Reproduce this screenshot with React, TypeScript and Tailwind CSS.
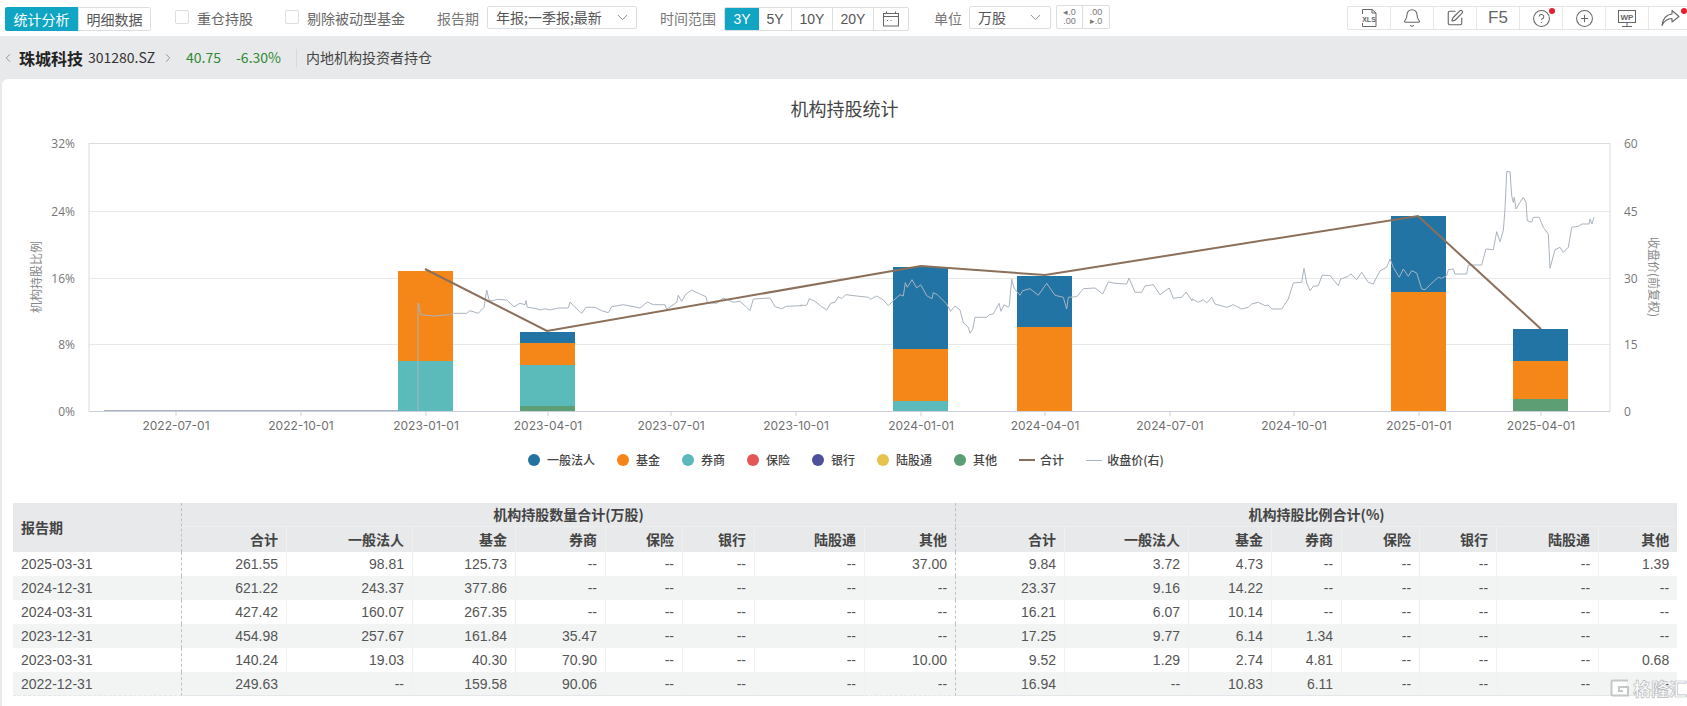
import React from "react";
import { Bell, ChevronDown, ChevronLeft, ChevronRight, CircleHelp, CirclePlus, SquarePen } from "lucide-react";

const segA = [[26,90],[32,122],[70,126],[120,122],[130,118],[170,118],[180,110],[205,118],[222,100],[230,48],[238,80],[250,80],[262,76],[290,78],[312,98],[330,88],[345,92],[348,80],[352,100],[375,103],[392,108],[405,104],[420,108],[445,102],[475,102],[480,84],[495,100],[515,118],[528,100],[555,100],[575,110],[595,116],[605,98],[640,92],[680,100],[690,102],[712,84],[730,92],[765,92],[770,106],[800,85],[805,64],[815,82],[828,60],[845,48],[865,58],[888,68],[892,86],[920,88],[940,72],[955,78],[970,85],[990,82],[1010,100],[1020,110],[1030,75],[1080,72],[1095,98],[1115,104],[1130,97],[1176,95]];
const segB = [[0,124],[20,124],[28,104],[45,112],[65,128],[80,138],[92,118],[105,115],[115,98],[125,104],[137,92],[170,96],[205,100],[212,106],[230,96],[250,108],[265,125],[280,110],[300,92],[310,96],[316,56],[322,70],[336,47],[350,72],[362,62],[380,95],[396,104],[400,86],[412,92],[440,120],[452,142],[465,126],[480,138],[490,176],[505,190],[510,208],[518,196],[525,160],[560,160],[568,152],[580,150],[597,118],[603,142],[612,122],[625,130],[628,125],[635,46],[642,72],[660,94],[668,80],[690,74],[715,94],[740,58],[765,94],[790,100],[800,135],[805,100],[830,98],[850,74],[885,72],[908,90],[925,54],[945,58],[980,60],[987,42],[1005,85],[1025,85],[1035,66],[1060,62],[1080,92],[1108,72],[1120,103],[1145,100],[1158,84],[1176,110]];
const segC = [[6,420],[25,430],[40,422],[50,432],[65,415],[75,435],[110,445],[130,437],[155,450],[175,445],[185,435],[205,430],[225,440],[235,438],[245,450],[275,450],[295,420],[310,372],[335,370],[342,328],[350,372],[360,395],[370,382],[385,380],[397,348],[420,350],[445,380],[452,360],[475,352],[482,344],[500,362],[515,340],[535,370],[550,375],[570,335],[590,325],[600,300],[610,325],[628,355],[640,330],[655,352],[665,335],[680,342],[695,390],[705,392],[730,368],[745,355],[755,358],[770,350],[775,332],[790,330],[795,345],[830,345],[835,318],[875,318],[888,270],[910,272],[920,218],[930,248],[940,215],[945,150],[950,38],[960,38],[965,110],[970,130],[973,115],[978,150],[990,130],[1000,115],[1008,130],[1012,185],[1025,190],[1030,175],[1048,175],[1060,205],[1075,225],[1080,328],[1095,272],[1110,265],[1120,280],[1135,265],[1145,205],[1165,202],[1176,195]];

const map = (seg: number[][], x0: number, y0: number) => seg.map(([x, y]) => `${(x0 + x / 3).toFixed(1)},${(y0 + y / 3).toFixed(1)}`).join(" ");
const pricePoints = ["418,412 418,304", map(segA, 410, 275), map(segB, 800, 265), map(segC, 1190, 160), "1589,225 1590,220 1592,225 1594,218"].join(" ");

const BLUE = "#2274a5", ORANGE = "#f58718", TEAL = "#5bbaba", GREEN = "#5e9e75";
const bars: { x: number; w: number; parts: [number, number, string][] }[] = [
  { x: 398, w: 55, parts: [[272, 362, ORANGE], [362, 412, TEAL]] },
  { x: 520, w: 55, parts: [[333, 344, BLUE], [344, 366, ORANGE], [366, 407, TEAL], [407, 412, GREEN]] },
  { x: 893, w: 55, parts: [[268, 350, BLUE], [350, 402, ORANGE], [402, 412, TEAL]] },
  { x: 1017, w: 55, parts: [[277, 328, BLUE], [328, 412, ORANGE]] },
  { x: 1391, w: 55, parts: [[217, 293, BLUE], [293, 412, ORANGE]] },
  { x: 1513, w: 55, parts: [[330, 362, BLUE], [362, 400, ORANGE], [400, 412, GREEN]] },
];
const xTicks: [number, string][] = [[176, "2022-07-01"], [301, "2022-10-01"], [426, "2023-01-01"], [548, "2023-04-01"], [671, "2023-07-01"], [796, "2023-10-01"], [921, "2024-01-01"], [1045, "2024-04-01"], [1170, "2024-07-01"], [1294, "2024-10-01"], [1419, "2025-01-01"], [1541, "2025-04-01"]];
const yTicks: [number, string, string][] = [[144, "32%", "60"], [212, "24%", "45"], [279, "16%", "30"], [345, "8%", "15"], [412, "0%", "0"]];

const legend: [string, string][] = [["#22739f", "一般法人"], ["#f58518", "基金"], ["#5bb9bb", "券商"], ["#e45756", "保险"], ["#4c5199", "银行"], ["#e5c34c", "陆股通"], ["#5a9e73", "其他"]];

const cols = ["合计", "一般法人", "基金", "券商", "保险", "银行", "陆股通", "其他"];
const widths = [169, 105, 126, 103, 90, 77, 72, 110, 91, 109, 124, 83, 70, 78, 77, 102, 78];
const rows = [
  ["2025-03-31", "261.55", "98.81", "125.73", "--", "--", "--", "--", "37.00", "9.84", "3.72", "4.73", "--", "--", "--", "--", "1.39"],
  ["2024-12-31", "621.22", "243.37", "377.86", "--", "--", "--", "--", "--", "23.37", "9.16", "14.22", "--", "--", "--", "--", "--"],
  ["2024-03-31", "427.42", "160.07", "267.35", "--", "--", "--", "--", "--", "16.21", "6.07", "10.14", "--", "--", "--", "--", "--"],
  ["2023-12-31", "454.98", "257.67", "161.84", "35.47", "--", "--", "--", "--", "17.25", "9.77", "6.14", "1.34", "--", "--", "--", "--"],
  ["2023-03-31", "140.24", "19.03", "40.30", "70.90", "--", "--", "--", "10.00", "9.52", "1.29", "2.74", "4.81", "--", "--", "--", "0.68"],
  ["2022-12-31", "249.63", "--", "159.58", "90.06", "--", "--", "--", "--", "16.94", "--", "10.83", "6.11", "--", "--", "--", "--"],
];

const ui = "font-['Noto_Sans_CJK_SC','Noto_Sans',sans-serif]";

function Check({ label, w }: { label: string; w: string }) {
  return (
    <div className="flex shrink-0 items-start">
      <span className="mt-[10px] h-[14px] w-[14px] rounded-[2px] border border-[#dcdfe2] bg-white" />
      <span className={`ml-2 mt-[6px] text-[14px] leading-6 text-[#666] ${w}`}>{label}</span>
    </div>
  );
}

const tool = "relative flex h-full w-[43px] shrink-0 items-center justify-center border-r border-[#e6e7e8] text-[#666]";

export default function App() {
  return (
    <div className={`relative h-[706px] w-[1687px] overflow-hidden bg-[#e8e9ea] ${ui}`}>
      {/* top toolbar */}
      <div className="flex h-9 items-start bg-white">
        <div className="ml-[5px] mt-[7px] flex h-6 shrink-0 text-[14px] leading-6">
          <span className="w-[73px] rounded-l-[2px] bg-[#10a5c2] text-center text-white">统计分析</span>
          <span className="w-[73px] rounded-r-[2px] border border-[#dcdfe2] text-center leading-[22px] text-[#555]">明细数据</span>
        </div>
        <div className="ml-[24px]"><Check label="重仓持股" w="w-[56px]" /></div>
        <div className="ml-[32px]"><Check label="剔除被动型基金" w="w-[98px]" /></div>
        <span className="ml-[32px] mt-[6px] w-[42px] shrink-0 text-[14px] leading-6 text-[#777]">报告期</span>
        <div className="ml-[8px] mt-[6px] flex h-[23px] w-[150px] shrink-0 items-center justify-between rounded-[2px] border border-[#dcdfe2] pl-2 pr-[5px] text-[14px] text-[#555]">
          <span>年报;一季报;最新</span>
          <ChevronDown size={17} strokeWidth={1.2} className="text-[#777]" />
        </div>
        <span className="ml-[23px] mt-[6px] w-[56px] shrink-0 text-[14px] leading-6 text-[#777]">时间范围</span>
        <div className="ml-[8px] mt-[7px] flex h-6 shrink-0 overflow-hidden rounded-[2px] border border-[#dcdfe2] text-[14px] leading-[22px] text-[#555] font-['Liberation_Sans',sans-serif]">
          <span className="-my-px w-[34px] bg-[#10a5c2] text-center leading-6 text-white">3Y</span>
          <span className="w-[33px] border-r border-[#dcdfe2] text-center">5Y</span>
          <span className="w-[41px] border-r border-[#dcdfe2] text-center">10Y</span>
          <span className="w-[41px] border-r border-[#dcdfe2] text-center">20Y</span>
          <span className="flex w-[34px] items-center justify-center">
            <svg width="16" height="16" viewBox="0 0 16 16" fill="none" stroke="#666" strokeWidth="1">
              <rect x="0.5" y="2.5" width="15" height="12.5" />
              <path d="M0.5 5.5H15.5M3.500 0.5V2.5M12.500 0.5V2.5" />
              <path d="M4 9.5H5M7.5 9.5H8.5" />
            </svg>
          </span>
        </div>
        <span className="ml-[25px] mt-[6px] w-[28px] shrink-0 text-[14px] leading-6 text-[#777]">单位</span>
        <div className="ml-[7px] mt-[6px] flex h-[23px] w-[82px] shrink-0 items-center justify-between rounded-[2px] border border-[#dcdfe2] pl-2 pr-[6px] text-[14px] text-[#555]">
          <span>万股</span>
          <ChevronDown size={17} strokeWidth={1.2} className="text-[#777]" />
        </div>
        <div className="ml-[5px] mt-[5px] flex h-6 shrink-0 rounded-[2px] border border-[#dcdfe2] text-[9px] leading-[9px] text-[#777] font-['Liberation_Sans',sans-serif]">
          <span className="flex w-[26px] flex-col items-center justify-center border-r border-[#dcdfe2]"><span>◂.0</span><span>.00</span></span>
          <span className="flex w-[26px] flex-col items-center justify-center"><span>.00</span><span>▸.0</span></span>
        </div>
        <div className="ml-auto mt-[6px] flex h-[24px] w-[340px] shrink-0 rounded-l-[2px] border-y border-l border-[#e3e4e5]">
          <div className={tool}>
            <svg width="18" height="20" viewBox="0 0 18 20" fill="none" stroke="#666" strokeWidth="1">
              <path d="M2.5 6V1.5H12L16 5V18.5H2.5V15" />
              <path d="M12 1.5V5H16" />
              <text x="9" y="13.5" fontSize="7" fontWeight="700" fill="#666" stroke="none" textAnchor="middle" fontFamily="Liberation Sans">XLS</text>
            </svg>
          </div>
          <div className={tool}><Bell size={20} strokeWidth={1.3} /></div>
          <div className={tool}><SquarePen size={18} strokeWidth={1.5} /></div>
          <div className={`${tool} text-[17px] font-['Liberation_Sans',sans-serif]`}>F5</div>
          <div className={tool}>
            <CircleHelp size={19} strokeWidth={1.3} />
            <span className="absolute right-[7px] top-[1px] h-[6px] w-[6px] rounded-full bg-[#e5202e]" />
          </div>
          <div className={tool}><CirclePlus size={19} strokeWidth={1.3} /></div>
          <div className={tool}>
            <svg width="20" height="19" viewBox="0 0 20 19" fill="none" stroke="#666" strokeWidth="1">
              <rect x="1.5" y="1.5" width="17" height="12" />
              <path d="M10 13.5V17M5 17.5H15" />
              <text x="10" y="11" fontSize="8" fontWeight="700" fill="#666" stroke="none" textAnchor="middle" fontFamily="Liberation Sans">WP</text>
            </svg>
          </div>
          <div className={`${tool} border-r-0`}>
            <svg width="19" height="18" viewBox="0 0 19 18" fill="none" stroke="#666" strokeWidth="1.1" strokeLinejoin="round">
              <path d="M11 1.500L18 7.500L11 13V9.500C6.500 9.500 3.500 11.500 1 16.500C1.500 10.500 5 5.500 11 5z" />
            </svg>
            <span className="absolute right-[5px] top-[1px] h-[6px] w-[6px] rounded-full bg-[#e5202e]" />
          </div>
        </div>
      </div>

      {/* stock bar */}
      <div className="flex h-[43px] items-center text-[14px] text-[#444]">
        <ChevronLeft size={14} strokeWidth={1.5} className="ml-[1px] shrink-0 text-[#888]" />
        <span className="ml-[4px] w-[64px] shrink-0 text-[16px] font-bold text-[#222]">珠城科技</span>
        <span className="ml-[5px] w-[68px] shrink-0 text-[#333]">301280.SZ</span>
        <ChevronRight size={14} strokeWidth={1.5} className="ml-[5px] shrink-0 text-[#888]" />
        <span className="ml-[11px] w-[36px] shrink-0 text-[#2e8b35]">40.75</span>
        <span className="ml-[14px] w-[45px] shrink-0 text-[#2e8b35]">-6.30%</span>
        <span className="ml-[15px] h-[18px] w-px shrink-0 bg-[#d8d9da]" />
        <span className="ml-[9px] shrink-0 text-[#444]">内地机构投资者持仓</span>
      </div>

      {/* card */}
      <div className="ml-[2px] h-[627px] rounded-tl-[6px] bg-white">
        <div className="h-[50px] pt-[17px] text-center text-[18px] leading-6 text-[#444]">机构持股统计</div>
        <svg width="1685" height="315" viewBox="2 130 1685 315" className="block" fontFamily="Inter, sans-serif">
          {yTicks.map(([y, l, r], i) => (
            <g key={l}>
              <line x1="89" x2="1610" y1={y + 0.5} y2={y + 0.5} stroke={i === 4 ? "#ccd0dc" : i === 0 ? "#dcdcdc" : "#e8e8e8"} />
              <text x="75" y={y} textAnchor="end" dominantBaseline="central" fontSize="12" fill="#777" fontFamily="Open Sans">{l}</text>
              <text x="1624" y={y} dominantBaseline="central" fontSize="12" fill="#777" fontFamily="Open Sans">{r}</text>
            </g>
          ))}
          <line x1="89" x2="89" y1="144" y2="413" stroke="#d8dae0" />
          <line x1="1610" x2="1610" y1="144" y2="413" stroke="#d8dae0" />
          <line x1="104" x2="418" y1="411.5" y2="411.5" stroke="#a9b3bf" />
          {xTicks.map(([x, t]) => (
            <g key={t}>
              <line x1={x} x2={x} y1="412" y2="417" stroke="#ccd0dc" />
              <text x={x} y="426" textAnchor="middle" dominantBaseline="central" fontSize="12" fill="#6f6f6f">{t}</text>
            </g>
          ))}
          {bars.map((b) => b.parts.map(([a, c, f]) => <rect key={`${b.x}-${a}`} x={b.x} y={a} width={b.w} height={c - a} fill={f} />))}
          <polyline points={pricePoints} fill="none" stroke="#a9b3bf" strokeWidth="1" />
          <polyline points="425,270 547,332 921,267 1045,276 1418,217 1541,330" fill="none" stroke="#8b6f5a" strokeWidth="2" />
          <text x="0" y="0" transform="translate(35 278) rotate(-90)" textAnchor="middle" dominantBaseline="central" fontSize="12" fill="#888" fontFamily="Noto Sans CJK SC">机构持股比例</text>
          <text x="0" y="0" transform="translate(1654 278) rotate(90)" textAnchor="middle" dominantBaseline="central" fontSize="12" fill="#888" fontFamily="Noto Sans CJK SC">收盘价(前复权)</text>
        </svg>

        {/* legend */}
        <div className="flex h-8 items-center gap-[22px] pl-[526px] text-[12px] font-medium text-[#444]">
          {legend.map(([c, l]) => (
            <div key={l} className="flex items-center gap-[7px]">
              <span className="h-3 w-3 rounded-full" style={{ backgroundColor: c }} />
              <span>{l}</span>
            </div>
          ))}
          <div className="flex items-center gap-[5px]">
            <span className="h-[2px] w-4 bg-[#8b6f5a]" />
            <span>合计</span>
          </div>
          <div className="flex items-center gap-[5px]">
            <span className="h-px w-4 bg-[#a9b3bf]" />
            <span>收盘价(右)</span>
          </div>
        </div>

        {/* table */}
        <table className="ml-[11px] mt-[27px] w-[1664px] table-fixed border-separate border-spacing-0 text-[14px] text-[#555] font-['Liberation_Sans','Noto_Sans_CJK_SC',sans-serif]">
          <colgroup>
            {widths.map((w, i) => <col key={i} style={{ width: w }} />)}
          </colgroup>
          <thead className="bg-[#e7e9ea] font-bold text-[#444]">
            <tr className="h-6">
              <th rowSpan={2} className="border-r border-dashed border-[#bfc2c5] pl-2 text-left font-['Noto_Sans_CJK_SC',sans-serif]">报告期</th>
              <th colSpan={8} className="border-b border-r border-dashed border-b-[#eceeef] border-r-[#bfc2c5] p-0 text-center font-['Noto_Sans_CJK_SC',sans-serif] [border-bottom-style:solid]">机构持股数量合计(万股)</th>
              <th colSpan={8} className="border-b border-[#eceeef] p-0 text-center font-['Noto_Sans_CJK_SC',sans-serif]">机构持股比例合计(%)</th>
            </tr>
            <tr className="h-[25px]">
              {[...cols, ...cols].map((c, i) => (
                <th key={i} className={`px-2 text-right font-['Noto_Sans_CJK_SC',sans-serif] ${i === 7 ? "border-r border-dashed border-[#bfc2c5]" : i === 15 ? "" : "border-r border-[#eef0f1]"}`}>{c}</th>
              ))}
            </tr>
          </thead>
          <tbody>
            {rows.map((r, ri) => (
              <tr key={r[0]} className={`h-6 ${ri % 2 ? "bg-[#f2f4f4]" : "bg-white"}`}>
                {r.map((v, i) => (
                  <td key={i} className={`overflow-hidden p-0 leading-none ${ri === 5 ? "border-b border-b-[#e5e6e7]" : ""} ${i === 0 ? "border-r border-dashed border-r-[#bfc2c5] pl-2 text-left" : i === 8 ? "border-r border-dashed border-r-[#bfc2c5] pr-2 text-right" : i === 16 ? "pr-2 text-right" : "border-r border-r-[#f0f1f1] pr-2 text-right"}`}>{v}</td>
                ))}
              </tr>
            ))}
          </tbody>
        </table>
      </div>

      {/* watermark */}
      <div className="absolute left-[1610px] top-[678px] flex items-center gap-[3px]">
        <svg width="20" height="20" viewBox="0 0 20 20" fill="none" stroke="#c4c6c8" strokeWidth="2">
          <path d="M18 2.5H3a1.500 1.500 0 0 0-1.500 1.500V16A1.500 1.500 0 0 0 3 17.500H18V9H9v4h4" fill="#fff" />
        </svg>
        <span className="text-[18px] font-bold leading-5 text-white [-webkit-text-stroke:0.7px_#b9bbbd]">格隆汇</span>
      </div>
    </div>
  );
}
